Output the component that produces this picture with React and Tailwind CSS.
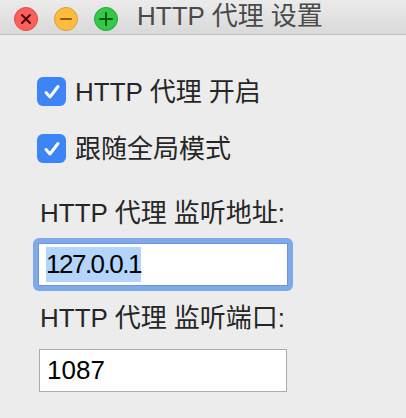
import React from 'react'

const font = { fontFamily: '"Liberation Sans", "Noto Sans CJK SC", sans-serif' }

function Light({ bg, ring, children }) {
  return (
    <div className={`w-[24px] h-[24px] rounded-full flex items-center justify-center border ${bg} ${ring}`}>
      {children}
    </div>
  )
}

function Check({ label }) {
  return (
    <div className="flex items-center h-[29px]">
      <div className="w-[29px] h-[29px] rounded-[6px] bg-[#3d85f6] flex items-center justify-center">
        <svg width="20" height="20" viewBox="0 0 20 20">
          <polyline points="4,10.5 8,15 16,4.5" fill="none" stroke="white" strokeWidth="3" strokeLinecap="round" strokeLinejoin="round" />
        </svg>
      </div>
      <span className="ml-[9px] text-[26px] leading-[30px] text-[#262626]">{label}</span>
    </div>
  )
}

export default function App() {
  return (
    <div className="w-[406px] h-[418px] bg-[#ececec] overflow-hidden" style={font}>
      <div className="h-[35px] bg-gradient-to-b from-[#ebebeb] to-[#d9d9d9] border-b border-[#c4c4c4] flex relative">
        <div className="flex gap-[16px] pl-[14px] pt-[7px]">
          <Light bg="bg-[#fc605c]" ring="border-[#de4a44]">
            <svg width="14" height="14" viewBox="0 0 14 14">
              <path d="M3 3 L11 11 M11 3 L3 11" stroke="#4c0002" strokeWidth="2" strokeLinecap="round" />
            </svg>
          </Light>
          <Light bg="bg-[#fdbc40]" ring="border-[#de9e2a]">
            <svg width="14" height="14" viewBox="0 0 14 14">
              <path d="M2 7 L12 7" stroke="#985712" strokeWidth="2" strokeLinecap="round" />
            </svg>
          </Light>
          <Light bg="bg-[#34c84a]" ring="border-[#23a834]">
            <svg width="16" height="16" viewBox="0 0 16 16">
              <path d="M8 2 L8 14 M2 8 L14 8" stroke="#0a5d0f" strokeWidth="2" strokeLinecap="round" />
            </svg>
          </Light>
        </div>
        <div className="ml-[19px] text-[26px] leading-[32px] text-[#4a4a4a]">HTTP 代理 设置</div>
      </div>

      <div className="pl-[37px] pt-[42px]">
        <Check label="HTTP 代理 开启" />
        <div className="mt-[28px]">
          <Check label="跟随全局模式" />
        </div>

        <div className="mt-[35px] ml-[3px] text-[26px] leading-[30px] text-[#262626]">HTTP 代理 监听地址:</div>
        <div className="mt-[10px] w-[260px] h-[53px] rounded-[6px] bg-[#7fa9eb] p-[5px] -ml-[4px]">
          <div className="h-[43px] bg-white border border-[#6d94d8] flex items-center pl-[7px]">
            <span className="bg-[#b3d4fd] text-[26px] leading-[35px] text-black tracking-[-1.5px]">127.0.0.1</span>
          </div>
        </div>

        <div className="mt-[12px] ml-[3px] text-[26px] leading-[30px] text-[#262626]">HTTP 代理 监听端口:</div>
        <div className="mt-[16px] ml-[2px] w-[248px] h-[43px] bg-white border border-[#ababab] flex items-center pl-[7px]">
          <span className="text-[26px] leading-[35px] text-black">1087</span>
        </div>
      </div>
    </div>
  )
}
